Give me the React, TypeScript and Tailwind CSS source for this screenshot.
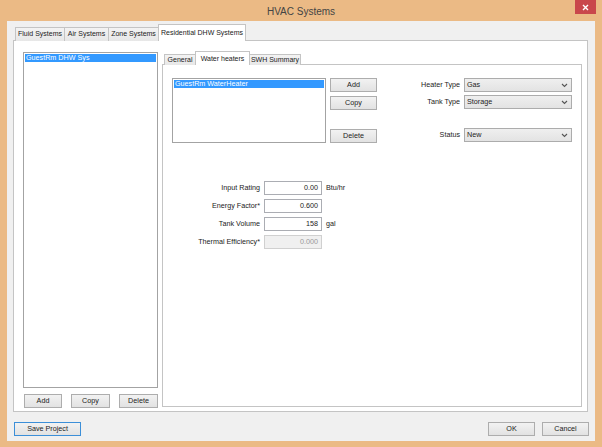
import React from "react";

const font = { fontFamily: '"Liberation Sans", Arial, sans-serif' };

function Btn({ label, w, def }: { label: string; w: string; def?: boolean }) {
  return (
    <div
      className={`${w} h-[14px] flex items-center justify-center whitespace-nowrap text-[7.2px] text-[#222] bg-gradient-to-b from-[#f2f2f2] to-[#e2e2e2] border ${def ? "border-[#3c8fd8]" : "border-[#adadad]"}`}
    >
      {label}
    </div>
  );
}

function Chevron() {
  return (
    <svg width="7" height="5" viewBox="0 0 7 5" className="mr-[3px]">
      <path d="M1 1 L3.5 3.5 L6 1" stroke="#555" strokeWidth="1.1" fill="none" />
    </svg>
  );
}

function Combo({ value }: { value: string }) {
  return (
    <div className="w-[108px] h-[14px] flex items-center justify-between bg-gradient-to-b from-[#efefef] to-[#e3e3e3] border border-[#acacac] text-[7.2px] text-[#222] pl-[2px]">
      <span>{value}</span>
      <Chevron />
    </div>
  );
}

function Field({ value, disabled }: { value: string; disabled?: boolean }) {
  return (
    <div
      className={`w-[58px] h-[14px] flex items-center justify-end pr-[3px] text-[7.2px] border ${disabled ? "bg-[#f0f0f0] border-[#d0d0d0] text-[#9a9a9a]" : "bg-white border-[#abadb3] text-[#222]"}`}
    >
      {value}
    </div>
  );
}

export default function App() {
  return (
    <div className="w-[602px] h-[447px] bg-[#ebba85] flex flex-col overflow-hidden" style={font}>
      {/* title bar */}
      <div className="h-[21px] grid grid-cols-[1fr_auto_1fr] items-start">
        <div />
        <div className="text-[10px] text-[#444] pt-[4px]">HVAC Systems</div>
        <div className="flex justify-end pr-[6px]">
          <div className="w-[21px] h-[14px] bg-[#c9474b] flex items-center justify-center">
            <svg width="7" height="7" viewBox="0 0 7 7">
              <path d="M1 1 L6 6 M6 1 L1 6" stroke="#fff" strokeWidth="1.4" />
            </svg>
          </div>
        </div>
      </div>

      {/* client */}
      <div className="ml-[7px] mr-[7px] h-[420px] bg-[#f0f0f0] flex flex-col px-[6px] text-[#222]">
        {/* outer tabs */}
        <div className="flex items-end h-[20px] pl-[2px] relative z-10 -mb-px whitespace-nowrap">
          <div className="w-[50px] h-[14px] flex items-center justify-center text-[7px] bg-gradient-to-b from-[#f3f3f3] to-[#e7e7e7] border border-[#c4c4c4] border-b-0">Fluid Systems</div>
          <div className="w-[44px] h-[14px] flex items-center justify-center text-[7px] bg-gradient-to-b from-[#f3f3f3] to-[#e7e7e7] border border-[#c4c4c4] border-l-0 border-b-0">Air Systems</div>
          <div className="w-[50px] h-[14px] flex items-center justify-center text-[7px] bg-gradient-to-b from-[#f3f3f3] to-[#e7e7e7] border border-[#c4c4c4] border-l-0 border-b-0">Zone Systems</div>
          <div className="w-[88px] h-[17px] flex items-start pt-[3px] justify-center text-[7px] bg-white border border-[#c4c4c4] border-b-0 -ml-px">Residential DHW Systems</div>
        </div>
        <div className="w-[575px] h-[372px] bg-white border border-[#c4c4c4] flex pl-[9px] pt-[11px] pb-[3px]">
          {/* left column */}
          <div className="w-[135px] flex flex-col">
            <div className="h-[336px] border border-[#a3a3a3] bg-white p-px">
              <div className="h-[8px] bg-[#3399ff] text-white text-[7.2px] leading-[8px] pl-[1px] whitespace-nowrap">GuestRm DHW Sys</div>
            </div>
            <div className="flex justify-between mt-[6px] pl-[1px]">
              <Btn label="Add" w="w-[38px]" />
              <Btn label="Copy" w="w-[39px]" />
              <Btn label="Delete" w="w-[39px]" />
            </div>
          </div>

          {/* inner tab control */}
          <div className="ml-[4px] flex flex-col">
            <div className="flex items-end h-[13px] pl-[2px] relative z-10 -mb-px whitespace-nowrap">
              <div className="w-[32px] h-[11px] flex items-center justify-center text-[7px] bg-gradient-to-b from-[#f3f3f3] to-[#e7e7e7] border border-[#c4c4c4] border-b-0">General</div>
              <div className="w-[55px] h-[14px] flex items-start pt-[2px] justify-center text-[7px] bg-white border border-[#c4c4c4] border-b-0 -ml-px">Water heaters</div>
              <div className="w-[52px] h-[11px] flex items-center justify-center text-[7px] bg-gradient-to-b from-[#f3f3f3] to-[#e7e7e7] border border-[#c4c4c4] border-b-0 -ml-px">SWH Summary</div>
            </div>
            <div className="w-[420px] h-[343px] bg-white border border-[#c4c4c4] pl-[9px] pt-[13px]">
              <div className="flex">
                <div className="w-[154px] h-[65px] border border-[#a3a3a3] p-px">
                  <div className="h-[8px] bg-[#3399ff] text-white text-[7.2px] leading-[8px] pl-[1px] whitespace-nowrap">GuestRm WaterHeater</div>
                </div>
                <div className="ml-[4px] w-[47px] h-[65px] flex flex-col">
                  <Btn label="Add" w="w-[47px]" />
                  <div className="mt-[4px]"><Btn label="Copy" w="w-[47px]" /></div>
                  <div className="mt-auto"><Btn label="Delete" w="w-[47px]" /></div>
                </div>
                <div className="ml-[38px] grid grid-cols-[45px_108px] gap-x-[4px] items-center content-start text-[7.2px] whitespace-nowrap">
                  <div className="text-right">Heater Type</div>
                  <Combo value="Gas" />
                  <div className="text-right mt-[3px]">Tank Type</div>
                  <div className="mt-[3px]"><Combo value="Storage" /></div>
                  <div className="text-right mt-[19px]">Status</div>
                  <div className="mt-[19px]"><Combo value="New" /></div>
                </div>
              </div>

              <div className="mt-[38px] grid grid-cols-[88px_58px_auto] gap-x-[4px] gap-y-[4px] items-center text-[7.2px] whitespace-nowrap">
                <div className="text-right">Input Rating</div>
                <Field value="0.00" />
                <div>Btu/hr</div>
                <div className="text-right">Energy Factor*</div>
                <Field value="0.600" />
                <div />
                <div className="text-right">Tank Volume</div>
                <Field value="158" />
                <div>gal</div>
                <div className="text-right">Thermal Efficiency*</div>
                <Field value="0.000" disabled />
                <div />
              </div>
            </div>
          </div>
        </div>

        {/* bottom buttons */}
        <div className="flex items-center mt-[10px] pl-[1px] pr-[0px]">
          <Btn label="Save Project" w="w-[67px]" def />
          <div className="ml-auto flex gap-[7px]">
            <Btn label="OK" w="w-[47px]" />
            <Btn label="Cancel" w="w-[47px]" />
          </div>
        </div>
      </div>
    </div>
  );
}
